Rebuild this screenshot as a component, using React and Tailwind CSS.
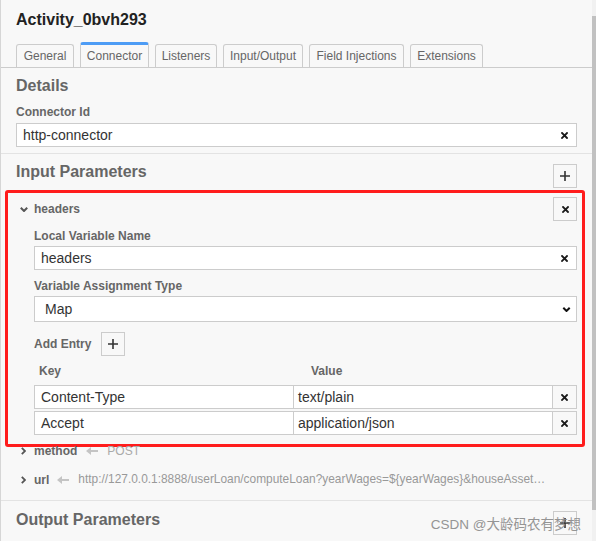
import React from "react";

const XIcon = () => (
  <svg width="7" height="7" viewBox="0 0 7 7" fill="none" stroke="#1a1a1a" strokeWidth="1.8" strokeLinecap="square">
    <path d="M1 1 L6 6 M6 1 L1 6" />
  </svg>
);

const PlusIcon = () => (
  <svg width="10" height="10" viewBox="0 0 10 10" fill="none" stroke="#333" strokeWidth="1.6">
    <path d="M5 0 V10 M0 5 H10" />
  </svg>
);

const ChevronDown = ({ color = "#555", w = 8, h = 5, sw = 1.8 }) => (
  <svg width={w} height={h} viewBox="0 0 8 5" fill="none" stroke={color} strokeWidth={sw}>
    <path d="M0.8 0.8 L4 4 L7.2 0.8" />
  </svg>
);

const ChevronRight = () => (
  <svg width="5" height="8" viewBox="0 0 5 8" fill="none" stroke="#555" strokeWidth="1.8">
    <path d="M0.8 0.8 L4 4 L0.8 7.2" />
  </svg>
);

const ArrowLeft = () => (
  <svg width="12" height="8" viewBox="0 0 12 8">
    <path d="M0 4 L5 0 L5 3 L12 3 L12 5 L5 5 L5 8 Z" fill="#c4c4c4" />
  </svg>
);

const Btn = ({ children, className = "" }) => (
  <div className={"flex h-[24px] w-[24px] shrink-0 items-center justify-center border border-[#ccc] bg-[#f8f8f8] " + className}>
    {children}
  </div>
);

const TextInput = ({ value, className = "" }) => (
  <div className={"flex h-[24px] items-center border border-[#ccc] bg-white pl-[6px] pr-[8px] " + className}>
    <span className="flex-1 text-[14px] leading-[18px] text-[#333]">{value}</span>
    <XIcon />
  </div>
);

const Label = ({ children, className = "" }) => (
  <div className={"h-[16px] text-[12px] font-bold leading-[16px] text-[#666] " + className}>{children}</div>
);

const Heading = ({ children }) => (
  <div className="h-[20px] text-[16px] font-bold leading-[20px] text-[#666]">{children}</div>
);

const Tab = ({ label, w, active }) => (
  <div
    className={
      "flex items-center justify-center rounded-t-[3px] border border-b-0 text-[12px] text-[#666] " +
      (active
        ? "h-[25px] border-[#ccc] border-t-[3px] border-t-[#4d9cf5] bg-[#f8f8f8]"
        : "h-[23px] border-[#ccc] bg-[#f8f8f8]")
    }
    style={{ width: w }}
  >
    {label}
  </div>
);

export default function App() {
  return (
    <div
      className="relative flex h-[541px] w-[596px] overflow-hidden bg-[#f8f8f8]"
      style={{ fontFamily: '"Liberation Sans", Arial, sans-serif' }}
    >
      <div className="flex h-full w-[592px] flex-col border-l border-[#d6d6d6]">
        {/* Title */}
        <div className="h-[30px] pl-[15px] pt-[10px] text-[16px] font-bold leading-[20px] text-[#222]">
          Activity_0bvh293
        </div>

        {/* Tabs */}
        <div className="mt-[12px] flex items-end gap-[6px] border-b border-[#ccc] pl-[15px]">
          <Tab label="General" w={58} />
          <Tab label="Connector" w={69} active />
          <Tab label="Listeners" w={62} />
          <Tab label="Input/Output" w={80} />
          <Tab label="Field Injections" w={95} />
          <Tab label="Extensions" w={73} />
        </div>

        {/* Details */}
        <div className="border-b border-[#e3e3e3] px-[15px] pb-[6px] pt-[8px]">
          <Heading>Details</Heading>
          <Label className="mt-[8px]">Connector Id</Label>
          <TextInput value="http-connector" className="mt-[3px]" />
        </div>

        {/* Input Parameters */}
        <div className="pt-[8px]">
          <div className="flex items-start justify-between px-[15px]">
            <Heading>Input Parameters</Heading>
            <Btn className="mt-[2px]">
              <PlusIcon />
            </Btn>
          </div>

          {/* headers block (highlighted) */}
          <div className="ml-[4px] mr-[7px] mt-[2px] rounded-[3px] border-[3px] border-[#ff1c1c] pb-[9px] pt-[4px]">
            <div className="flex h-[24px] items-center justify-between pl-[12px] pr-[5px]">
              <div className="flex items-center gap-[6px]">
                <ChevronDown w={8} h={5} sw={2} />
                <span className="text-[12px] font-bold text-[#666]">headers</span>
              </div>
              <Btn>
                <XIcon />
              </Btn>
            </div>

            <div className="pl-[26px] pr-[5px]">
              <Label className="mt-[7px]">Local Variable Name</Label>
              <TextInput value="headers" className="mt-[2px]" />

              <Label className="mt-[8px]">Variable Assignment Type</Label>
              <div className="mt-[2px] flex h-[26px] items-center justify-between border border-[#ccc] bg-white pl-[10px] pr-[5px]">
                <span className="text-[14px] text-[#333]">Map</span>
                <ChevronDown color="#111" w={9} h={5} sw={2} />
              </div>

              <div className="mt-[10px] flex h-[24px] items-center gap-[10px]">
                <span className="text-[12px] font-bold text-[#666]">Add Entry</span>
                <Btn>
                  <PlusIcon />
                </Btn>
              </div>

              <div className="mt-[7px] flex h-[16px] text-[12px] font-bold leading-[16px] text-[#666]">
                <div className="w-[260px] pl-[5px]">Key</div>
                <div className="pl-[17px]">Value</div>
              </div>

              {[
                ["Content-Type", "text/plain"],
                ["Accept", "application/json"],
              ].map(([k, v], i) => (
                <div key={k} className={"flex h-[24px] " + (i === 0 ? "mt-[6px]" : "mt-[2px]")}>
                  <div className="flex w-[260px] items-center border border-[#ccc] bg-white pl-[6px] text-[14px] text-[#333]">
                    {k}
                  </div>
                  <div className="flex flex-1 items-center border border-l-0 border-[#ccc] bg-white pl-[4px] text-[14px] text-[#333]">
                    {v}
                  </div>
                  <Btn className="border-l-0">
                    <XIcon />
                  </Btn>
                </div>
              ))}
            </div>
          </div>

          {/* method */}
          <div className="mt-[-4px] flex h-[16px] items-center pl-[20px] text-[12px]">
            <ChevronRight />
            <span className="ml-[8px] font-bold text-[#666]">method</span>
            <span className="ml-[9px] flex items-center">
              <ArrowLeft />
            </span>
            <span className="ml-[9px] text-[#aaa]">POST</span>
          </div>

          {/* url */}
          <div className="mt-[13px] flex h-[16px] items-center pl-[20px] text-[12px]">
            <ChevronRight />
            <span className="ml-[8px] font-bold text-[#666]">url</span>
            <span className="ml-[8px] flex items-center">
              <ArrowLeft />
            </span>
            <span className="ml-[9px] whitespace-nowrap text-[11.9px] text-[#999]">
              http://127.0.0.1:8888/userLoan/computeLoan?yearWages=${"{"}yearWages{"}"}&amp;houseAsset…
            </span>
          </div>
        </div>

        {/* Output Parameters */}
        <div className="mt-[12px] border-t border-[#e3e3e3] pt-[9px]">
          <div className="flex items-start justify-between px-[15px]">
            <Heading>Output Parameters</Heading>
            <Btn className="mt-[1px]">
              <PlusIcon />
            </Btn>
          </div>
        </div>
      </div>

      {/* scrollbar */}
      <div className="flex h-full w-[4px] flex-col bg-[#f1f1f1]">
        <div className="mt-[16px] h-[494px] w-full bg-[#c1c1c1]" />
      </div>

      {/* watermark */}
      <div
        className="pointer-events-none absolute bottom-[7px] right-[15px] text-[13.5px] leading-[18px] text-[#8a8a8a] opacity-90"
        style={{ fontFamily: '"Liberation Sans", "Noto Sans CJK SC", sans-serif' }}
      >
        CSDN @大龄码农有梦想
      </div>
    </div>
  );
}
